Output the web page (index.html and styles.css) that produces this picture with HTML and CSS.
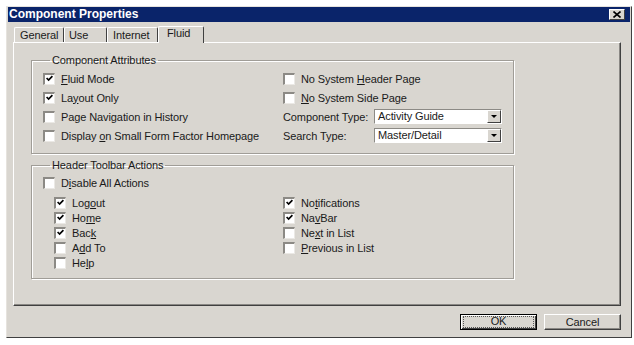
FILE: index.html
```html
<!DOCTYPE html>
<html lang="en">
<head>
    <meta charset="UTF-8">
    <title>Component Properties</title>
    <link rel="stylesheet" href="styles.css">
</head>
<body>
    <div class="window">
        <div class="titlebar">
            <span class="title">Component Properties</span>
            <span class="close-btn">
                <svg width="8" height="7" viewBox="0 0 8 7"><path d="M0.5 0.5 L7.5 6.5 M7.5 0.5 L0.5 6.5" stroke="#000" stroke-width="1.6"/></svg>
            </span>
        </div>

        <div class="window-body">
            <div class="tabs">
                <div class="tab tab-general">General</div>
                <div class="tab tab-use">Use</div>
                <div class="tab tab-internet">Internet</div>
                <div class="tab tab-fluid active">Fluid</div>
            </div>

            <div class="tab-panel">
                <fieldset class="group group-attrs">
                    <legend>Component Attributes</legend>
                    <div class="attr-grid">
                        <label class="check"><span class="box checked"></span><span><u>F</u>luid Mode</span></label>
                        <label class="check"><span class="box"></span><span>No System <u>H</u>eader Page</span></label>

                        <label class="check"><span class="box checked"></span><span>La<u>y</u>out Only</span></label>
                        <label class="check"><span class="box"></span><span><u>N</u>o System Side Page</span></label>

                        <label class="check"><span class="box"></span><span>Page Navigation in History</span></label>
                        <div class="field"><span class="field-label">Component Type:</span><div class="combo"><span class="combo-value">Activity Guide</span><span class="combo-btn"></span></div></div>

                        <label class="check"><span class="box"></span><span>Display <u>o</u>n Small Form Factor Homepage</span></label>
                        <div class="field"><span class="field-label">Search Type:</span><div class="combo"><span class="combo-value">Master/Detail</span><span class="combo-btn"></span></div></div>
                    </div>
                </fieldset>

                <fieldset class="group group-actions">
                    <legend>Header Toolbar Actions</legend>
                    <label class="check disable-row"><span class="box"></span><span>D<u>i</u>sable All Actions</span></label>
                    <div class="actions-grid">
                        <div class="actions-col">
                            <label class="check"><span class="box checked"></span><span>Log<u>o</u>ut</span></label>
                            <label class="check"><span class="box checked"></span><span>Ho<u>m</u>e</span></label>
                            <label class="check"><span class="box checked"></span><span>Bac<u>k</u></span></label>
                            <label class="check"><span class="box"></span><span>A<u>d</u>d To</span></label>
                            <label class="check"><span class="box"></span><span>He<u>l</u>p</span></label>
                        </div>
                        <div class="actions-col">
                            <label class="check"><span class="box checked"></span><span>No<u>t</u>ifications</span></label>
                            <label class="check"><span class="box checked"></span><span>Na<u>v</u>Bar</span></label>
                            <label class="check"><span class="box"></span><span>Ne<u>x</u>t in List</span></label>
                            <label class="check"><span class="box"></span><span><u>P</u>revious in List</span></label>
                        </div>
                    </div>
                </fieldset>
            </div>

            <div class="buttons">
                <div class="btn default"><span class="btn-focus">OK</span></div>
                <div class="btn">Cancel</div>
            </div>
        </div>
    </div>
</body>
</html>
```

FILE: styles.css
```css
* {
    margin: 0;
    padding: 0;
    box-sizing: border-box;
}

body {
    background: #fff;
    font-family: "Liberation Sans", Arial, sans-serif;
    font-size: 11px;
    letter-spacing: -0.1px;
    color: #1a1a1a;
}

.window {
    margin: 6px 0 0 6px;
    width: 626px;
    height: 332px;
    background: #d9d6d0;
    border: 1px solid;
    border-color: #e6e3de #404040 #404040 #e6e3de;
    padding: 0 1px 1px;
}

.titlebar {
    height: 15px;
    background: #0a246a;
    display: flex;
    align-items: center;
    justify-content: space-between;
    padding: 0 5px 0 1px;
}

.title {
    color: #fff;
    font-weight: bold;
    font-size: 12px;
    line-height: 15px;
    letter-spacing: 0;
}

.close-btn {
    width: 16px;
    height: 11px;
    background: #d9d6d0;
    border: 1px solid;
    border-color: #fff #404040 #404040 #fff;
    display: flex;
    align-items: center;
    justify-content: center;
}

.window-body {
    padding: 4px 9px 0 5px;
}

/* tabs */
.tabs {
    display: flex;
    height: 16px;
    padding-left: 1px;
    align-items: flex-end;
}

.tab {
    height: 15px;
    line-height: 14px;
    padding-left: 5px;
    border: 1px solid;
    border-bottom: none;
    border-color: #fff #404040 #fff #fff;
    border-radius: 2px 2px 0 0;
}

.tab-general { width: 50px; }
.tab-use { width: 43px; padding-left: 4px; }
.tab-internet { width: 51px; padding-left: 5px; }

.tab-fluid {
    width: 46px;
    height: 17px;
    margin-bottom: -1px;
    padding-left: 8px;
    background: #d9d6d0;
    position: relative;
    line-height: 13px;
}

.tab-panel {
    height: 264px;
    border: 1px solid;
    border-color: #fff #404040 #404040 #fff;
    box-shadow: inset -1px -1px #8a8884;
    padding: 11px 0 0 17px;
}

/* group boxes */
.group {
    width: 483px;
    border: 1px solid #a09d97;
    box-shadow: inset 1px 1px #fff, 1px 1px #fff;
}

.group legend {
    margin-left: 7px;
    padding: 0 2px;
    line-height: 13px;
}

.group-attrs {
    padding: 2px 0 8px 11px;
}

.attr-grid {
    display: grid;
    grid-template-columns: 240px 1fr;
    grid-auto-rows: 19px;
}

.group-actions {
    margin-top: 5px;
    padding: 3px 0 8px 11px;
}

.disable-row {
    height: 16px;
}

.actions-grid {
    display: grid;
    grid-template-columns: 229px 1fr;
    margin: 4px 0 0 11px;
}

.actions-col .check {
    height: 15px;
}

/* checkboxes */
.check {
    display: flex;
    align-items: center;
    gap: 6px;
}

.box {
    width: 12px;
    height: 12px;
    background: #fff;
    border-top: 2px solid #8c8a85;
    border-left: 2px solid #8c8a85;
    border-right: 1px solid #ebe9e5;
    border-bottom: 1px solid #ebe9e5;
    position: relative;
    flex-shrink: 0;
}

.box.checked::after {
    content: "";
    position: absolute;
    left: 1px;
    top: 0px;
    width: 7px;
    height: 7px;
    background: url("data:image/svg+xml,%3Csvg xmlns='http://www.w3.org/2000/svg' width='7' height='7' viewBox='0 0 7 7'%3E%3Cpath d='M0.6 3 L2.6 5 L6.4 1.2' fill='none' stroke='%23000' stroke-width='1.7'/%3E%3C/svg%3E") no-repeat;
}

/* combo boxes */
.field {
    display: flex;
    align-items: center;
}

.field-label {
    width: 91px;
}

.combo {
    width: 128px;
    height: 15px;
    background: #fff;
    border: 1px solid;
    border-color: #8c8a85 #fff #fff #8c8a85;
    display: flex;
    align-items: center;
    justify-content: space-between;
}

.combo-value {
    padding-left: 3px;
    line-height: 13px;
}

.combo-btn {
    width: 14px;
    height: 13px;
    background: #d9d6d0;
    border: 1px solid;
    border-color: #fff #404040 #404040 #fff;
    position: relative;
}

.combo-btn::after {
    content: "";
    position: absolute;
    left: 3px;
    top: 4px;
    border-left: 3px solid transparent;
    border-right: 3px solid transparent;
    border-top: 3px solid #000;
}

/* buttons */
.buttons {
    display: flex;
    justify-content: flex-end;
    gap: 7px;
    margin-top: 8px;
}

.btn {
    width: 77px;
    height: 16px;
    line-height: 14px;
    text-align: center;
    border: 1px solid;
    border-color: #fff #404040 #404040 #fff;
    box-shadow: inset -1px -1px #8a8884;
}

.btn.default {
    border: 1px solid #000;
    box-shadow: inset 1px 1px #fff, inset -1px -1px #404040;
    padding: 2px 3px;
}

.btn-focus {
    display: block;
    height: 10px;
    line-height: 9px;
    outline: 1px dotted #555;
}
```
